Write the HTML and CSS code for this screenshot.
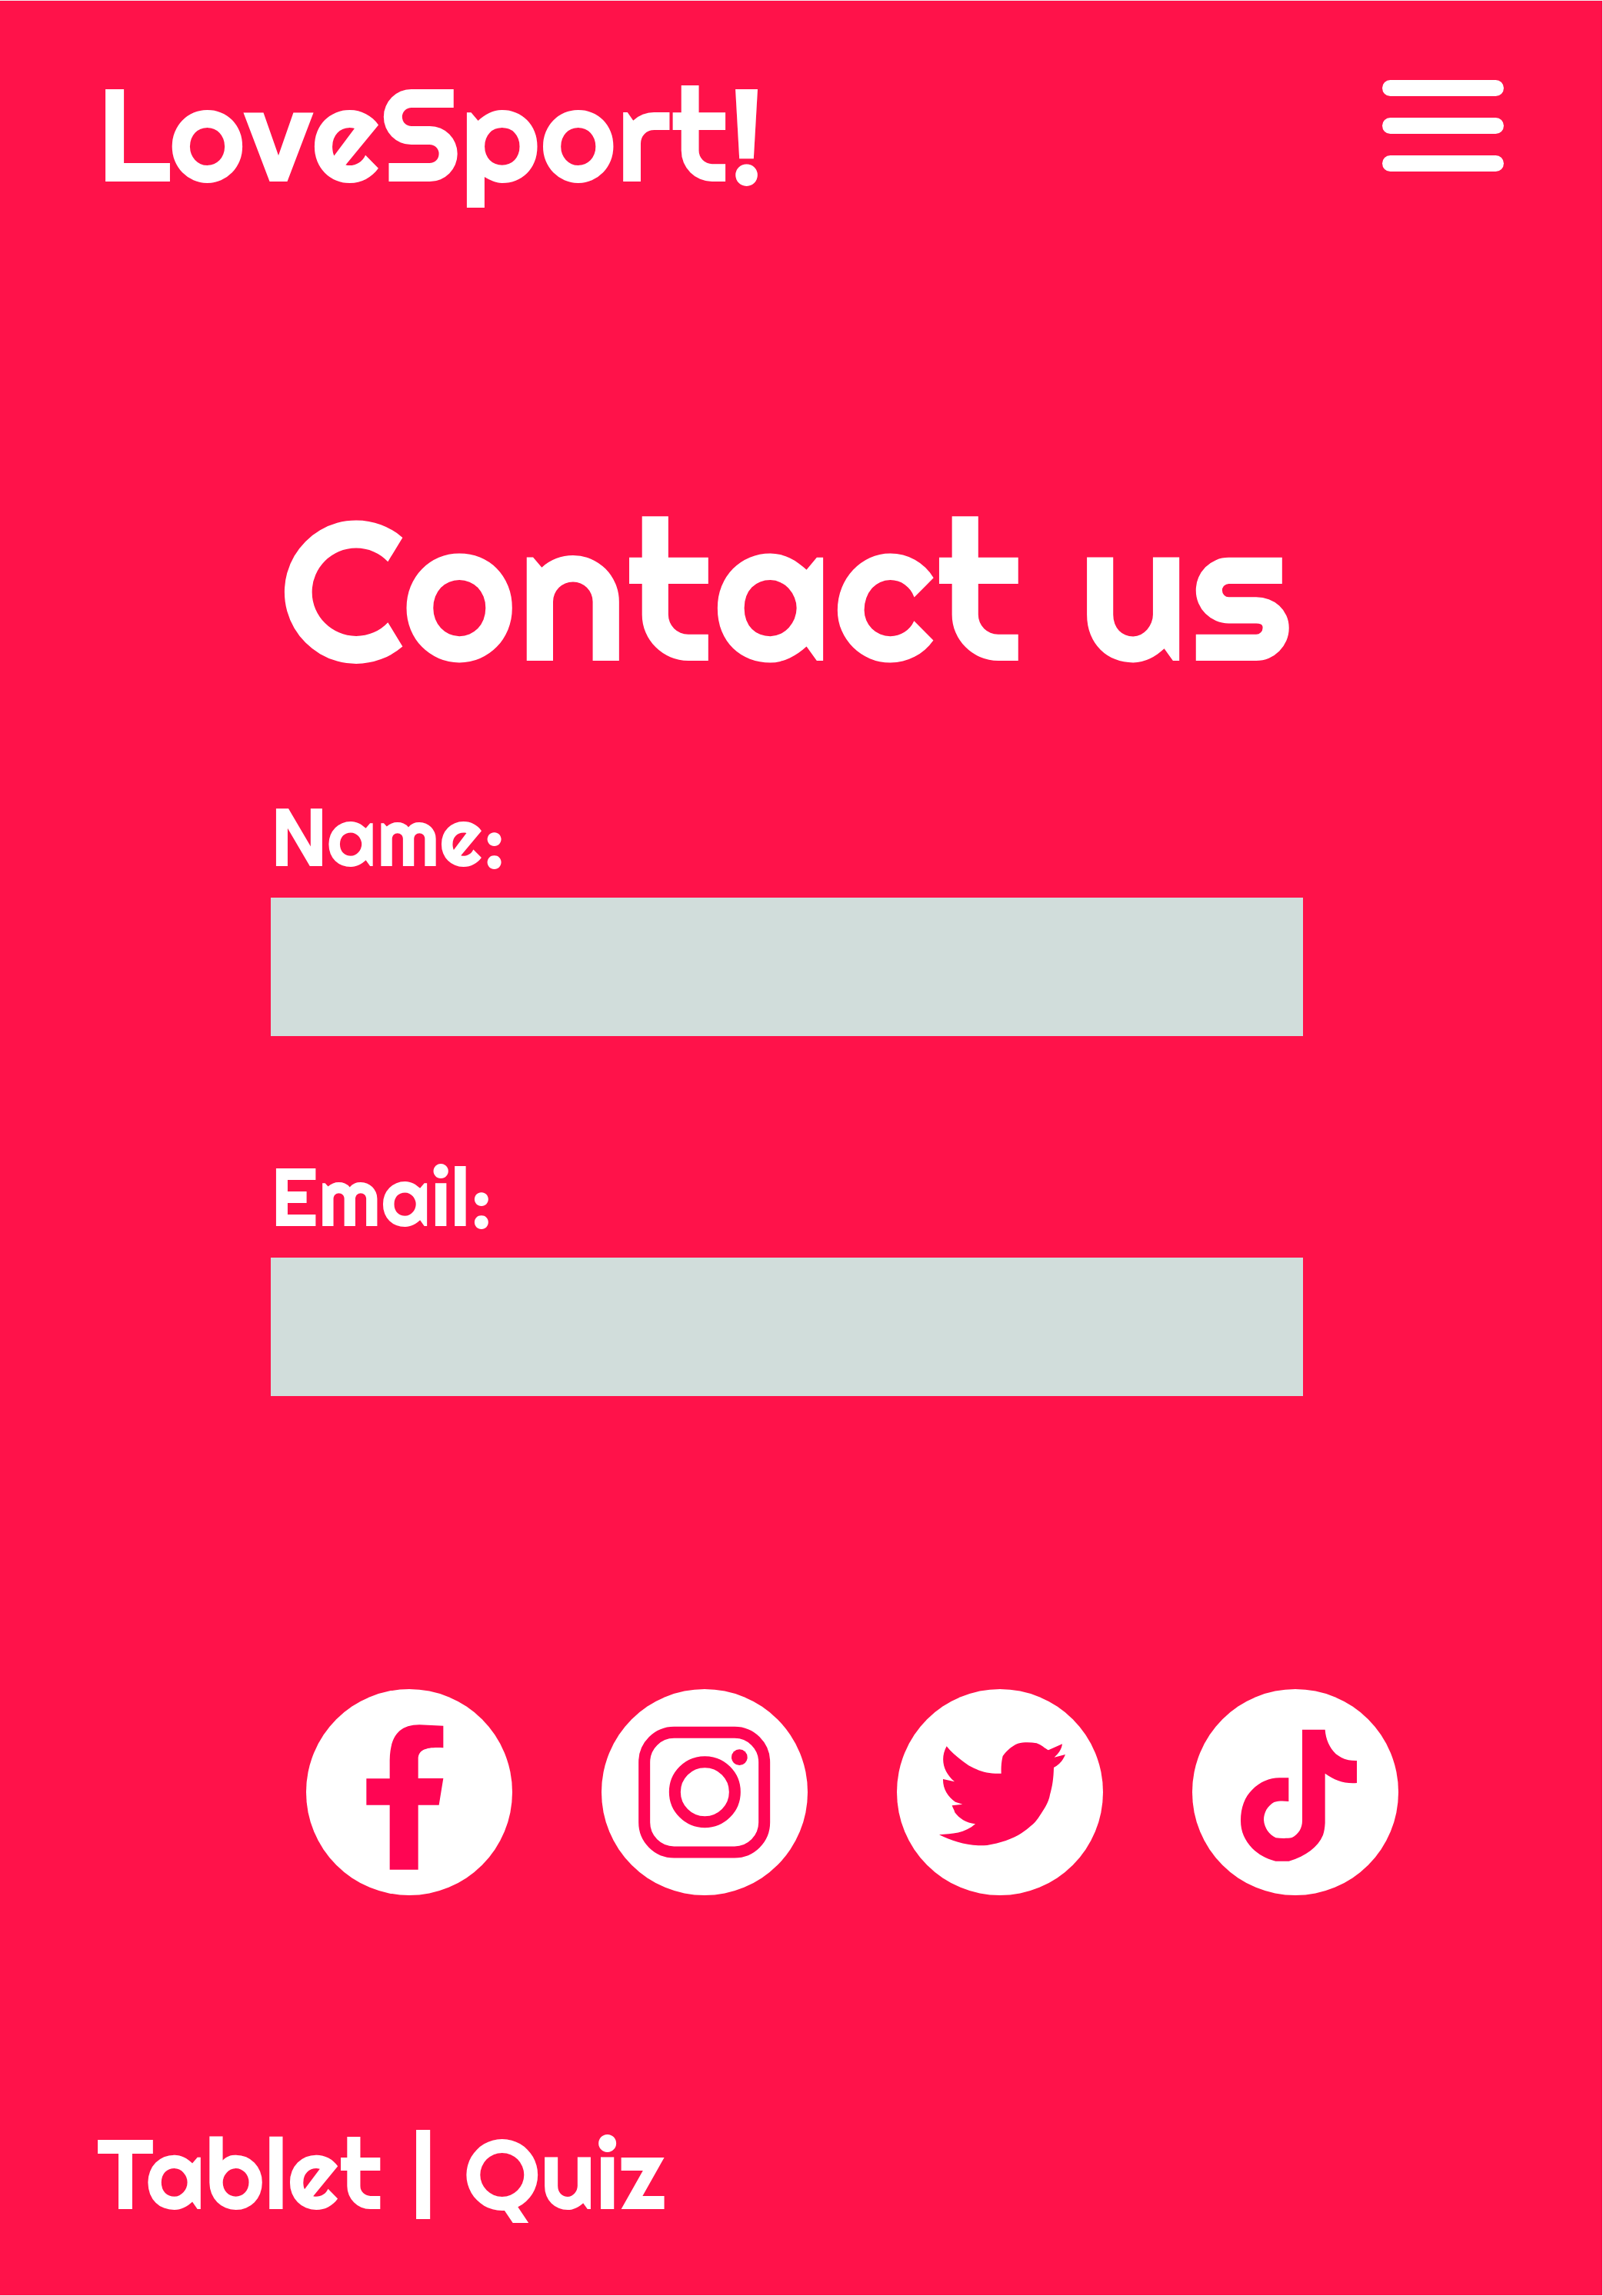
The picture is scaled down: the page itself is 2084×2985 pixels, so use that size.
FILE: index.html
```html
<!DOCTYPE html>
<html lang="en">
<head>
  <meta charset="utf-8">
  <meta name="viewport" content="width=device-width, initial-scale=1">
  <title>LoveSport! - Contact us</title>
  <link rel="stylesheet" href="styles.css">
</head>
<body>
  <div class="page">
    <header class="header">
      <a class="brand" href="#">LoveSport!</a>
      <button class="menu" type="button" aria-label="Menu">
        <span class="menu-bar"></span>
        <span class="menu-bar"></span>
        <span class="menu-bar"></span>
      </button>
    </header>

    <main class="main">
      <h1 class="title">Contact us</h1>
      <form class="form">
        <div class="field">
          <label class="label" for="name">Name:</label>
          <input class="input" id="name" name="name" type="text">
        </div>
        <div class="field">
          <label class="label" for="email">Email:</label>
          <input class="input" id="email" name="email" type="email">
        </div>
      </form>
      <nav class="social" aria-label="Social media">
        <a class="social-link" href="#" aria-label="Facebook">
          <svg class="social-icon" viewBox="53 48 804 804">
            <circle class="disc" cx="455" cy="450" r="402"/>
            <path class="glyph" d="M588 191V277C530 274 490 280 490 322V396H588L571 500H490V752H379V500H288V397H379V330C379 240 410 187 495 187Z"/>
          </svg>
        </a>
        <a class="social-link" href="#" aria-label="Instagram">
          <svg class="social-icon" viewBox="51 48 804 804">
            <circle class="disc" cx="453" cy="450" r="402"/>
            <rect class="outline" x="218" y="217" width="468" height="467" rx="116"/>
            <circle class="outline" cx="454" cy="449" r="117"/>
            <circle class="glyph" cx="589" cy="314" r="31"/>
          </svg>
        </a>
        <a class="social-link" href="#" aria-label="Twitter">
          <svg class="social-icon" viewBox="48 48 804 804">
            <circle class="disc" cx="450" cy="450" r="402"/>
            <path class="glyph" d="M242 271C264 299 296 323 328 346C366 366 400 379 455 377C454 350 456 330 461 309C476 288 496 270 520 260C545 254 570 255 593 259C612 266 626 280 639 286L693 262C690 284 678 300 662 314L705 303C697 325 680 344 660 354C659 395 655 425 645 460C641 490 617 525 599 551C585 572 560 591 534 610C500 632 450 650 400 657C330 663 268 643 213 616C262 613 315 610 354 574C318 570 291 552 274 529C272 519 265 510 263 502L304 497L276 488C246 466 227 436 228 399L273 409C228 372 216 318 242 271Z"/>
          </svg>
        </a>
        <a class="social-link" href="#" aria-label="TikTok">
          <svg class="social-icon" viewBox="45 48 804 804">
            <circle class="disc" cx="447" cy="450" r="402"/>
            <path class="glyph" d="M474 206H563C566 245 580 275 605 301C628 318 648 328 687 327V414C640 418 600 404 563 377V570C562 588 560 602 555 617C535 664 490 698 422 719H370C330 708 305 694 279 669C250 637 234 605 234 560C234 510 250 468 279 440C310 410 345 394 385 394H421V486C401 484 385 483 364 489C338 504 324 530 324 558C326 590 346 616 371 628C390 630 415 631 434 627C460 613 474 590 474 560Z"/>
          </svg>
        </a>
      </nav>
    </main>

    <footer class="footer">
      <a class="footer-link" href="#">Tablet</a> | <a class="footer-link" href="#">Quiz</a>
    </footer>
  </div>
</body>
</html>
```

FILE: styles.css
```css
* {
  box-sizing: border-box;
}

body {
  margin: 0;
  background: #ff124a;
  color: #fff;
  font-family: Righteous, Inter, "Liberation Sans", sans-serif;
  font-weight: 400;
}

a {
  color: inherit;
  text-decoration: none;
}

.page {
  display: flex;
  flex-direction: column;
  min-height: 100vh;
  border: 1px solid #f4eef0;
  border-left: 0;
}

.header {
  display: flex;
  justify-content: space-between;
  align-items: flex-start;
  padding: 73px 128px 0 126px;
}

.brand {
  font-size: 171px;
  line-height: 200px;
}

.menu {
  display: flex;
  flex-direction: column;
  gap: 28px;
  width: 158px;
  margin: 30px 0 0;
  padding: 0;
  border: 0;
  background: none;
}

.menu-bar {
  width: 100%;
  height: 21px;
  border-radius: 12px;
  background: #fff;
}

.title {
  margin: 342px 0 0;
  padding-left: 363px;
  font-size: 257px;
  font-weight: 400;
  line-height: 300px;
}

.form {
  display: flex;
  flex-direction: column;
  gap: 148px;
  margin-top: 111px;
  padding: 0 389px 0 352px;
}

.field {
  display: flex;
  flex-direction: column;
}

.label {
  height: 140px;
  font-size: 107px;
  line-height: 120px;
}

.input {
  width: 100%;
  height: 180px;
  padding: 0 40px;
  border: 0;
  border-radius: 0;
  background: #d1dddb;
  font: inherit;
  font-size: 107px;
}

.social {
  display: flex;
  gap: 116px;
  margin-top: 381px;
  padding-left: 398px;
}

.social-link,
.social-icon {
  display: block;
  width: 268px;
  height: 268px;
}

.disc {
  fill: #fff;
}

.glyph {
  fill: #ff0553;
}

.outline {
  fill: none;
  stroke: #ff0553;
  stroke-width: 45;
}

.footer {
  margin-top: auto;
  padding: 0 126px 83px;
  font-size: 128px;
  line-height: 150px;
}
```
